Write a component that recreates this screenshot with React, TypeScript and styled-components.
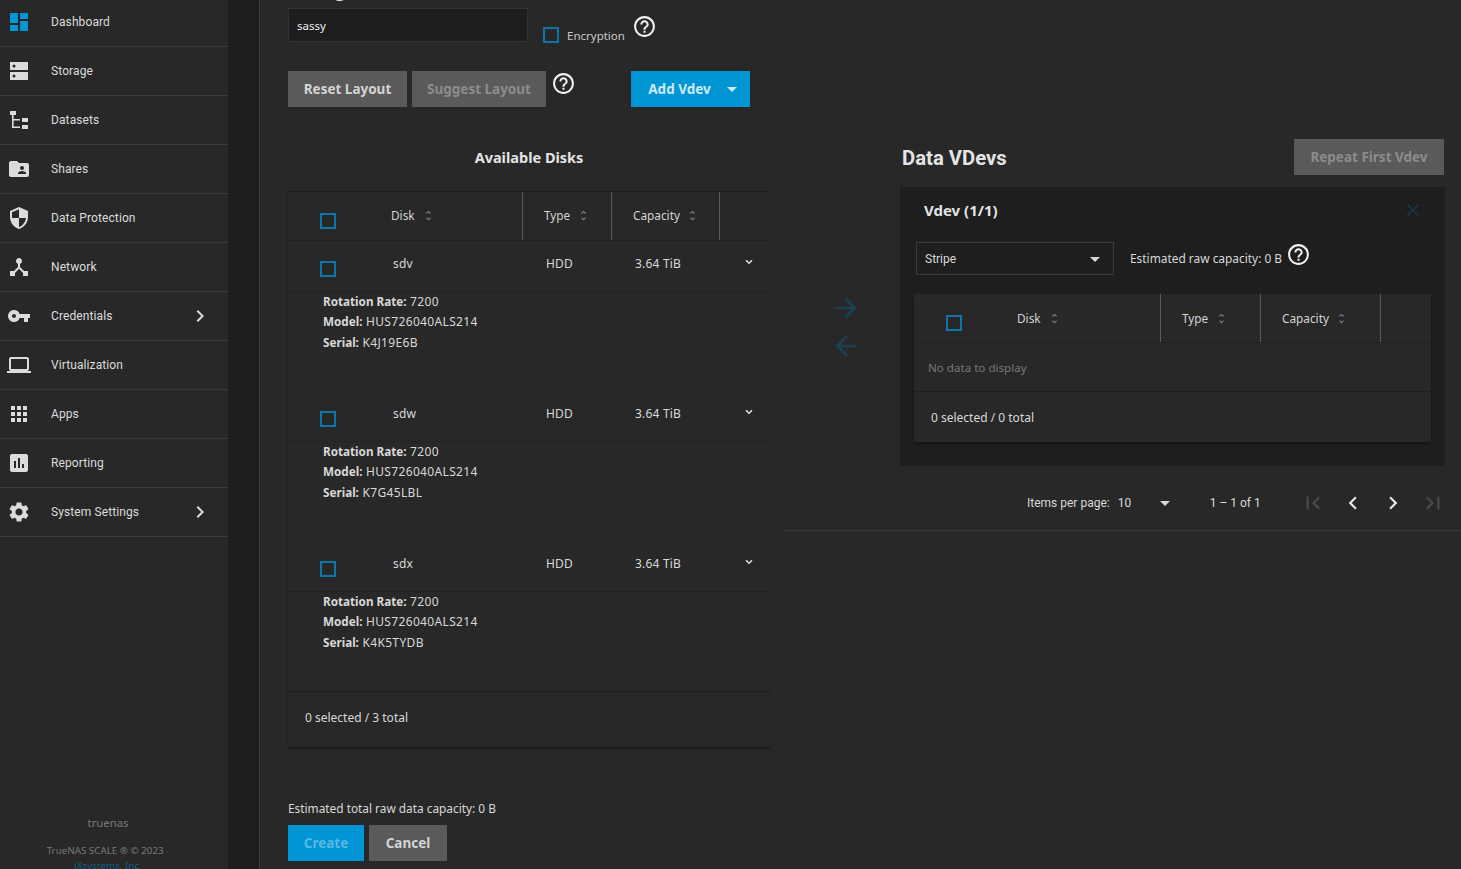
import { FC, ReactNode } from 'react'
import styled, { createGlobalStyle } from 'styled-components'
import {
  MdApps,
  MdArrowBack,
  MdArrowDropDown,
  MdArrowForward,
  MdAssessment,
  MdChevronLeft,
  MdChevronRight,
  MdClose,
  MdDashboard,
  MdDeviceHub,
  MdFirstPage,
  MdFolderShared,
  MdHelpOutline,
  MdLaptop,
  MdLastPage,
  MdSecurity,
  MdSettings,
  MdUnfoldMore,
  MdVpnKey
} from 'react-icons/md'

const BLUE = '#0095d5'
const SANS = '"Noto Sans", "Open Sans", sans-serif'

const GlobalStyle = createGlobalStyle`
  html, body {
    margin: 0;
    padding: 0;
    height: 100%;
    overflow: hidden;
    background: #282828;
  }
  * {
    box-sizing: border-box;
  }
`

const Page = styled.div`
  display: flex;
  width: 1461px;
  height: 869px;
  overflow: hidden;
  background: #282828;
  color: #e0e0e0;
  font-family: ${SANS};
  font-size: 12px;
`

const Sidebar = styled.nav`
  display: flex;
  flex-direction: column;
  flex: none;
  width: 228px;
  height: 100%;
  background: #282828;
  font-family: Roboto, sans-serif;
`

const NavRow = styled.div<{ $first?: boolean }>`
  display: flex;
  align-items: center;
  flex: none;
  height: ${(p) => (p.$first ? 47 : 49)}px;
  padding-bottom: ${(p) => (p.$first ? 2 : 0)}px;
  padding-left: 7px;
  padding-right: 16px;
  border-bottom: 1px solid #3a3a3a;
  color: #dcdcdc;
  svg {
    flex: none;
  }
`

const NavLabel = styled.span`
  flex: 1;
  margin-left: 20px;
  font-size: 12px;
  letter-spacing: 0.1px;
`

const SideFooter = styled.div`
  margin-top: auto;
  height: 63px;
  margin-bottom: -10px;
  padding-right: 12px;
  text-align: center;
  color: #787878;
  font-size: 9.8px;
  font-family: ${SANS};
`

const HostName = styled.div`
  font-size: 11.3px;
  line-height: 14px;
  margin-bottom: 13px;
`

const Copy = styled.div`
  line-height: 15px;
  white-space: nowrap;
`

const CopyLink = styled.span`
  color: #0b5f87;
`

const Gutter = styled.div`
  flex: none;
  width: 32px;
  height: 100%;
  background: #1e1e1e;
  border-right: 1px solid #3a3a3a;
`

const Main = styled.main`
  flex: 1;
  min-width: 0;
  padding-left: 28px;
`

const ClippedLabel = styled.div`
  height: 30px;
  margin-top: -22px;
  padding-left: 39px;
  color: #e8e8e8;
`

const NameRow = styled.div`
  display: flex;
  align-items: flex-start;
  height: 63px;
`

const NameInput = styled.div`
  display: flex;
  align-items: center;
  width: 240px;
  height: 34px;
  padding-left: 8px;
  background: #1e1e1e;
  border: 1px solid #333;
  color: #f0f0f0;
  font-size: 11.5px;
`

const CheckField = styled.label`
  display: flex;
  align-items: center;
  margin: 19px 0 0 15px;
  color: #c8c8c8;
  font-size: 11.5px;
  gap: 8px;
`

const CheckBox = styled.span`
  display: block;
  flex: none;
  width: 16px;
  height: 16px;
  border: 2px solid #0a77aa;
`

const Help = styled.span<{ $top: number; $left: number }>`
  display: block;
  flex: none;
  height: 25px;
  color: #f0f0f0;
  margin-top: ${(p) => p.$top}px;
  margin-left: ${(p) => p.$left}px;
`

const ActionRow = styled.div`
  display: flex;
  align-items: flex-start;
  height: 36px;
`

const Button = styled.div<{ $w: number; $primary?: boolean; $dim?: boolean; $ml?: number }>`
  display: flex;
  align-items: center;
  justify-content: center;
  flex: none;
  width: ${(p) => p.$w}px;
  height: 36px;
  margin-left: ${(p) => p.$ml ?? 0}px;
  background: ${(p) => (p.$primary ? BLUE : '#5a5a5a')};
  color: ${(p) =>
    p.$primary
      ? p.$dim
        ? '#5cb8e2'
        : '#cfeaf7'
      : p.$dim
        ? '#8c8c8c'
        : '#d4d4d4'};
  font-size: 13.5px;
  font-weight: 700;
  white-space: nowrap;
`

const DropCaret = styled.span`
  display: flex;
  margin-left: 9px;
  margin-right: -11px;
`

const Columns = styled.div`
  display: flex;
  margin-top: 32px;
`

const LeftColumn = styled.section`
  flex: none;
  width: 482px;
`

const ColumnTitle = styled.h3`
  display: flex;
  align-items: center;
  justify-content: center;
  height: 36px;
  margin: 0 0 16px;
  color: #e4e4e4;
  font-size: 14.5px;
  font-weight: 700;
`

const Table = styled.div<{ $flush?: boolean }>`
  background: #282828;
  border-top: ${(p) => (p.$flush ? 0 : '1px solid #1f1f1f')};
  box-shadow: 0 2px 2px rgba(0, 0, 0, 0.3);
`

const GridRow = styled.div<{ $cols: string; $h: number; $line?: boolean }>`
  display: grid;
  grid-template-columns: ${(p) => p.$cols};
  height: ${(p) => p.$h}px;
  border-bottom: ${(p) => (p.$line ? '1px solid #222' : 0)};
`

const HeadCell = styled.div<{ $pad: number; $divider?: boolean }>`
  display: flex;
  align-items: center;
  height: 100%;
  padding-left: ${(p) => p.$pad}px;
  border-right: ${(p) => (p.$divider ? '1px solid #5a5a5a' : 0)};
  color: #d4d4d4;
  font-size: 11.8px;
`

const SortMark = styled.span<{ $gap: number }>`
  display: flex;
  margin-left: ${(p) => p.$gap}px;
  color: #7d7d7d;
`

const SelectCell = styled.div<{ $box: number }>`
  display: flex;
  align-items: center;
  padding-left: ${(p) => p.$box}px;
`

const NameCell = styled(HeadCell)`
  padding-left: 0;
  flex: 1;
`

const HeadSplit = styled.div`
  display: grid;
  grid-template-columns: 103px 1fr;
  align-items: center;
  height: 100%;
  border-right: 1px solid #5a5a5a;
  > ${SelectCell} {
    margin-top: 10px;
  }
`

const BodyCell = styled.div<{ $pad: number }>`
  padding-left: ${(p) => p.$pad}px;
  padding-top: 15px;
  color: #d8d8d8;
  font-size: 12px;
  letter-spacing: 0.2px;
  line-height: 16px;
`

const BodySplit = styled.div`
  display: grid;
  grid-template-columns: 105px 1fr;
  ${SelectCell} {
    margin-top: 20px;
    align-items: flex-start;
  }
`

const RowChevron = styled.div`
  padding: 18px 0 0 25px;
  color: #e0e0e0;
  line-height: 0;
`

const Detail = styled.div`
  height: 100px;
  margin-top: -1px;
  padding-left: 35px;
  color: #d8d8d8;
  font-size: 12px;
  letter-spacing: 0.35px;
`

const DetailLine = styled.div`
  height: 20px;
  line-height: 20px;
  &:nth-child(2) {
    height: 21px;
  }
  b {
    font-size: 11.7px;
    font-weight: 700;
    letter-spacing: 0;
  }
`

const TableFoot = styled.div<{ $h: number; $pad: number }>`
  display: flex;
  align-items: center;
  height: ${(p) => p.$h}px;
  padding-left: ${(p) => p.$pad}px;
  border-top: 1px solid #1f1f1f;
  color: #d8d8d8;
  font-size: 12px;
`

const DiskTable = styled(Table)`
  ${HeadCell} {
    padding-bottom: 2px;
  }
  ${TableFoot} {
    padding-bottom: 5px;
  }
`

const CapacityLine = styled.div`
  margin-top: 53px;
  line-height: 16px;
  color: #d8d8d8;
  font-size: 11.85px;
`

const SubmitRow = styled.div`
  display: flex;
  gap: 5px;
  margin-top: 9px;
`

const RightPane = styled.section`
  display: grid;
  grid-template-columns: 116px 545px;
  flex: 1;
  height: 392px;
  margin-left: 14px;
  border-bottom: 1px solid #3a3a3a;
`

const Arrows = styled.div`
  display: flex;
  flex-direction: column;
  align-items: center;
  padding: 153px 0 0 8px;
  gap: 6px;
  color: #1a4052;
`

const VdevColumn = styled.div`
  display: flex;
  flex-direction: column;
`

const VdevHead = styled.div`
  display: flex;
  align-items: center;
  justify-content: space-between;
  height: 36px;
  margin-bottom: 12px;
  padding-left: 2px;
  padding-right: 1px;
`

const VdevTitle = styled.h2`
  margin: 2px 0 0;
  color: #e4e4e4;
  font-family: Roboto, sans-serif;
  font-size: 20.3px;
  font-weight: 700;
`

const VdevPanel = styled.div`
  height: 279px;
  padding: 0 14px 0 14px;
  background: #1e1e1e;
`

const PanelHead = styled.div`
  display: flex;
  align-items: center;
  justify-content: space-between;
  height: 48px;
  padding: 0 7px 2px 10px;
  color: #e4e4e4;
  font-size: 15px;
  font-weight: 700;
`

const CloseIcon = styled.span`
  display: flex;
  color: #143545;
`

const TypeRow = styled.div`
  display: flex;
  align-items: flex-start;
  height: 52px;
  margin-top: 7px;
`

const TypeSelect = styled.div`
  display: flex;
  align-items: center;
  justify-content: space-between;
  flex: none;
  width: 198px;
  height: 33px;
  margin-left: 2px;
  padding: 0 6px 0 8px;
  border: 1px solid #3a3a3a;
  color: #d8d8d8;
  font-family: Roboto, sans-serif;
  font-size: 12px;
`

const RawCapacity = styled.span`
  margin: 8px 0 0 16px;
  color: #d8d8d8;
  line-height: 16px;
  font-size: 11.9px;
  white-space: nowrap;
`

const NoData = styled.div`
  display: flex;
  align-items: center;
  height: 48px;
  padding-left: 14px;
  color: #777;
  font-size: 11.6px;
`

const Pager = styled.div`
  display: flex;
  align-items: center;
  height: 64px;
  padding-top: 10px;
  padding-left: 127px;
  color: #d8d8d8;
  font-family: Roboto, sans-serif;
  font-size: 12px;
`

const PagerLabel = styled.span`
  flex: none;
  white-space: nowrap;
`

const PagerSize = styled.span`
  display: flex;
  align-items: center;
  justify-content: space-between;
  flex: none;
  width: 59px;
  margin-left: 8px;
`

const PagerRange = styled.span`
  flex: none;
  width: 83px;
  margin-left: 33px;
  white-space: nowrap;
`

const PagerButton = styled.span<{ $off?: boolean }>`
  display: flex;
  justify-content: center;
  flex: none;
  width: 40px;
  color: ${(p) => (p.$off ? '#4a4a4a' : '#e8e8e8')};
`

const StorageIcon: FC = () => (
  <svg width='24' height='24' viewBox='0 0 24 24' fill='currentColor'>
    <path d='M3 3h18v8H3zM3 13h18v8H3z' />
    <circle cx='7' cy='7' r='1.5' fill='#282828' />
    <circle cx='7' cy='17' r='1.5' fill='#282828' />
  </svg>
)

const DatasetIcon: FC = () => (
  <svg width='24' height='24' viewBox='0 0 24 24' fill='currentColor'>
    <path d='M3 3h6v4H3zM15 10h6v4h-6zM15 17h6v4h-6z' />
    <path d='M5 7h1.6v4h6.4v1.6H6.6v5.8H13V20H5z' />
  </svg>
)

const ExpandChevron: FC = () => (
  <svg width='8' height='6' viewBox='0 0 8 6' fill='none'>
    <path d='M1 1.2l3 3 3-3' stroke='currentColor' strokeWidth='1.6' />
  </svg>
)

const navItems: { label: string; icon: ReactNode; more?: boolean }[] = [
  { label: 'Dashboard', icon: <MdDashboard size={24} color={BLUE} /> },
  { label: 'Storage', icon: <StorageIcon /> },
  { label: 'Datasets', icon: <DatasetIcon /> },
  { label: 'Shares', icon: <MdFolderShared size={24} /> },
  { label: 'Data Protection', icon: <MdSecurity size={24} /> },
  { label: 'Network', icon: <MdDeviceHub size={24} /> },
  { label: 'Credentials', icon: <MdVpnKey size={24} />, more: true },
  { label: 'Virtualization', icon: <MdLaptop size={24} /> },
  { label: 'Apps', icon: <MdApps size={24} /> },
  { label: 'Reporting', icon: <MdAssessment size={24} /> },
  { label: 'System Settings', icon: <MdSettings size={24} />, more: true }
]

const disks = [
  { name: 'sdv', serial: 'K4J19E6B' },
  { name: 'sdw', serial: 'K7G45LBL' },
  { name: 'sdx', serial: 'K4K5TYDB' }
]

const DISK_COLS = '235px 89px 108px 1fr'
const VDEV_COLS = '247px 100px 120px 1fr'

const Sort: FC<{ gap: number }> = ({ gap }) => (
  <SortMark $gap={gap}>
    <MdUnfoldMore size={13} />
  </SortMark>
)

const HeaderRow: FC<{ cols: string }> = ({ cols }) => (
  <GridRow $cols={cols} $h={49} $line>
    <HeadSplit>
      <SelectCell $box={32}>
        <CheckBox />
      </SelectCell>
      <NameCell $pad={0}>
        Disk
        <Sort gap={7} />
      </NameCell>
    </HeadSplit>
    <HeadCell $pad={21} $divider>
      Type
      <Sort gap={7} />
    </HeadCell>
    <HeadCell $pad={21} $divider>
      Capacity
      <Sort gap={6} />
    </HeadCell>
    <div />
  </GridRow>
)

const App: FC = () => (
  <Page>
    <GlobalStyle />
    <Sidebar>
      {navItems.map((item, i) => (
        <NavRow key={item.label} $first={i === 0}>
          {item.icon}
          <NavLabel>{item.label}</NavLabel>
          {item.more && <MdChevronRight size={24} />}
        </NavRow>
      ))}
      <SideFooter>
        <HostName>truenas</HostName>
        <Copy>
          TrueNAS SCALE ® © 2023 <CopyLink>-</CopyLink>
        </Copy>
        <Copy>
          <CopyLink>iXsystems, Inc.</CopyLink>
        </Copy>
      </SideFooter>
    </Sidebar>
    <Gutter />
    <Main>
      <ClippedLabel>
        <MdHelpOutline size={25} />
      </ClippedLabel>
      <NameRow>
        <NameInput>sassy</NameInput>
        <CheckField>
          <CheckBox />
          Encryption
        </CheckField>
        <Help $top={6} $left={7}>
          <MdHelpOutline size={25} />
        </Help>
      </NameRow>
      <ActionRow>
        <Button $w={119}>Reset Layout</Button>
        <Button $w={134} $ml={5} $dim>
          Suggest Layout
        </Button>
        <Help $top={0} $left={5}>
          <MdHelpOutline size={25} />
        </Help>
        <Button $w={119} $ml={55} $primary>
          Add Vdev
          <DropCaret>
            <MdArrowDropDown size={24} />
          </DropCaret>
        </Button>
      </ActionRow>
      <Columns>
        <LeftColumn>
          <ColumnTitle>Available Disks</ColumnTitle>
          <DiskTable>
            <HeaderRow cols={DISK_COLS} />
            {disks.map((disk) => (
              <div key={disk.name}>
                <GridRow $cols={DISK_COLS} $h={51} $line>
                  <BodySplit>
                    <SelectCell $box={32}>
                      <CheckBox />
                    </SelectCell>
                    <BodyCell $pad={0}>{disk.name}</BodyCell>
                  </BodySplit>
                  <BodyCell $pad={23}>HDD</BodyCell>
                  <BodyCell $pad={23}>3.64 TiB</BodyCell>
                  <RowChevron>
                    <ExpandChevron />
                  </RowChevron>
                </GridRow>
                <Detail>
                  <DetailLine>
                    <b>Rotation Rate:</b> 7200
                  </DetailLine>
                  <DetailLine>
                    <b>Model:</b> HUS726040ALS214
                  </DetailLine>
                  <DetailLine>
                    <b>Serial:</b> {disk.serial}
                  </DetailLine>
                </Detail>
              </div>
            ))}
            <TableFoot $h={56} $pad={17}>
              0 selected / 3 total
            </TableFoot>
          </DiskTable>
          <CapacityLine>Estimated total raw data capacity: 0 B</CapacityLine>
          <SubmitRow>
            <Button $w={76} $primary $dim>
              Create
            </Button>
            <Button $w={78}>Cancel</Button>
          </SubmitRow>
        </LeftColumn>
        <RightPane>
          <Arrows>
            <MdArrowForward size={32} />
            <MdArrowBack size={32} />
          </Arrows>
          <VdevColumn>
            <VdevHead>
              <VdevTitle>Data VDevs</VdevTitle>
              <Button $w={150} $dim>
                Repeat First Vdev
              </Button>
            </VdevHead>
            <VdevPanel>
              <PanelHead>
                Vdev (1/1)
                <CloseIcon>
                  <MdClose size={22} />
                </CloseIcon>
              </PanelHead>
              <TypeRow>
                <TypeSelect>
                  Stripe
                  <MdArrowDropDown size={24} />
                </TypeSelect>
                <RawCapacity>Estimated raw capacity: 0 B</RawCapacity>
                <Help $top={0} $left={4}>
                  <MdHelpOutline size={25} />
                </Help>
              </TypeRow>
              <Table $flush>
                <HeaderRow cols={VDEV_COLS} />
                <NoData>No data to display</NoData>
                <TableFoot $h={51} $pad={17}>
                  0 selected / 0 total
                </TableFoot>
              </Table>
            </VdevPanel>
            <Pager>
              <PagerLabel>Items per page:</PagerLabel>
              <PagerSize>
                10
                <MdArrowDropDown size={24} />
              </PagerSize>
              <PagerRange>1 – 1 of 1</PagerRange>
              <PagerButton $off>
                <MdFirstPage size={26} />
              </PagerButton>
              <PagerButton>
                <MdChevronLeft size={26} />
              </PagerButton>
              <PagerButton>
                <MdChevronRight size={26} />
              </PagerButton>
              <PagerButton $off>
                <MdLastPage size={26} />
              </PagerButton>
            </Pager>
          </VdevColumn>
        </RightPane>
      </Columns>
    </Main>
  </Page>
)

export default App
